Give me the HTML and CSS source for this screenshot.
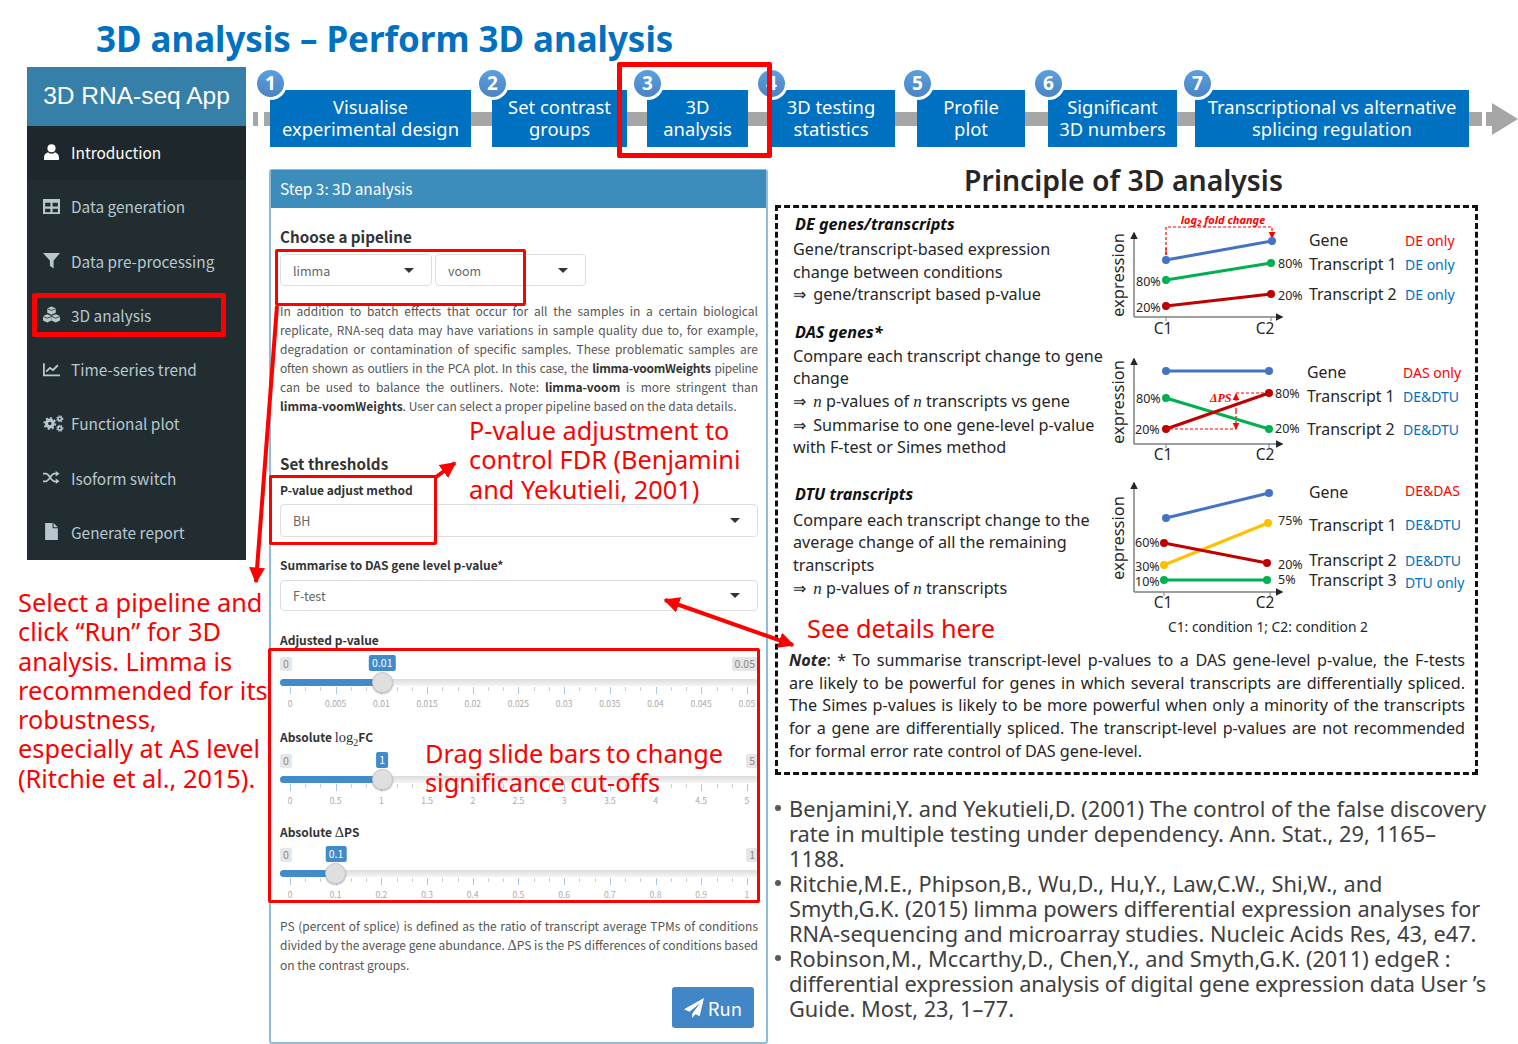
FILE: index.html
```html
<!DOCTYPE html>
<html lang="en">
<head>
    <meta charset="UTF-8">
    <title>3D analysis - Perform 3D analysis</title>
    <link rel="stylesheet" href="styles.css">
</head>
<body>
<div class="slide">
    <h1 class="title">3D analysis – Perform 3D analysis</h1>

    <div class="main">
        <aside class="left">
            <nav class="sidebar">
                <div class="brand">3D RNA-seq App</div>
                <a class="item active">
                    <svg class="ico" viewBox="0 0 16 16"><circle cx="8" cy="4" r="3.8"/><path d="M1 15v-2.500C1 9.500 3.500 8 5 8c1 .8 2 1.200 3 1.200S10 8.800 11 8c1.500 0 4 1.500 4 4.500V15z"/></svg>
                    Introduction
                </a>
                <a class="item">
                    <svg class="ico" viewBox="0 0 16 16"><path fill-rule="evenodd" d="M0 1h16v14H0z M2 4.500h5v3.500H2z M9 4.500h5v3.500H9z M2 10h5v3.500H2z M9 10h5v3.500H9z"/></svg>
                    Data generation
                </a>
                <a class="item">
                    <svg class="ico" viewBox="0 0 16 16"><path d="M0 1h16L10 8v7.500L6.500 13V8z"/></svg>
                    Data pre-processing
                </a>
                <a class="item">
                    <svg class="ico" viewBox="0 0 16 16"><path d="M8 .5l4 1.700v4.200L8 8.200 4 6.400V2.200z"/><path d="M4 7.800l4 1.700v4.200l-4 1.800-4-1.800V9.500z"/><path d="M12 7.800l4 1.700v4.200l-4 1.800-4-1.800V9.500z"/><path class="cube-line" d="M4 2.500L8 4.200l4-1.700M0 9.800L4 11.500l4-1.700M8 9.800L12 11.500l4-1.700"/></svg>
                    3D analysis
                </a>
                <a class="item">
                    <svg class="ico" viewBox="0 0 16 16"><path class="ln" d="M.8 2v11.500H16"/><path class="ln" d="M3 10l3.500-3.500 3 2L14 4"/></svg>
                    Time-series trend
                </a>
                <a class="item">
                    <svg class="ico ico-wide" viewBox="0 0 20 16"><circle class="cog" cx="6.500" cy="8" r="3.200"/><circle class="teeth" cx="6.500" cy="8" r="5.300"/><circle class="cog thin" cx="16" cy="3.500" r="1.700"/><circle class="teeth thin" cx="16" cy="3.500" r="2.900"/><circle class="cog thin" cx="16" cy="12.500" r="1.700"/><circle class="teeth thin" cx="16" cy="12.500" r="2.900"/></svg>
                    Functional plot
                </a>
                <a class="item">
                    <svg class="ico" viewBox="0 0 18 16"><path class="ln" d="M0 4h3c3.500 0 5.500 8 9 8h2M0 12h3c3.500 0 5.500-8 9-8h2"/><path d="M13.500 1l4 3-4 3zM13.500 9l4 3-4 3z"/></svg>
                    Isoform switch
                </a>
                <a class="item">
                    <svg class="ico" viewBox="0 0 16 16"><path d="M2 0h7v5h5v11H2zM10 0l4 4h-4z"/></svg>
                    Generate report
                </a>
            </nav>
            <p class="note-red side-note">Select a pipeline and<br>click “Run” for 3D<br>analysis. Limma is<br>recommended for its<br>robustness,<br>especially at AS level<br>(Ritchie et al., 2015).</p>
        </aside>

        <div class="work">
            <div class="strip">
                <i class="break"></i>
                <div class="step s1"><b class="num">1</b>Visualise<br>experimental design</div>
                <div class="step s2"><b class="num">2</b>Set contrast<br>groups</div>
                <div class="step s3"><b class="num">3</b>3D<br>analysis</div>
                <div class="step s4"><b class="num">4</b>3D testing<br>statistics</div>
                <div class="step s5"><b class="num">5</b>Profile<br>plot</div>
                <div class="step s6"><b class="num">6</b>Significant<br>3D numbers</div>
                <div class="step s7"><b class="num">7</b>Transcriptional vs alternative<br>splicing regulation</div>
                <i class="break end"></i>
                <i class="stem"></i>
                <i class="head"></i>
            </div>

            <div class="row">
                <section class="panel">
                    <div class="panel-head">Step 3: 3D analysis</div>
                    <div class="panel-body">
                        <h4 class="big-label first">Choose a pipeline</h4>
                        <div class="pipes">
                            <div class="select small-a">limma<i class="caret"></i></div>
                            <div class="select small-b">voom<i class="caret"></i></div>
                        </div>
                        <p class="copy intro">
                            <span class="j">In addition to batch effects that occur for all the samples in a certain biological</span>
                            <span class="j">replicate, RNA-seq data may have variations in sample quality due to, for example,</span>
                            <span class="j">degradation or contamination of specific samples. These problematic samples are</span>
                            <span class="j tight">often shown as outliers in the PCA plot. In this case, the <b>limma-voomWeights</b> pipeline</span>
                            <span class="j">can be used to balance the outliners. Note: <b>limma-voom</b> is more stringent than</span>
                            <span><b>limma-voomWeights</b>. User can select a proper pipeline based on the data details.</span>
                        </p>

                        <h4 class="big-label thresholds">Set thresholds</h4>
                        <label class="lbl lbl-method">P-value adjust method</label>
                        <div class="select tall">BH<i class="caret"></i></div>
                        <label class="lbl lbl-sum">Summarise to DAS gene level p-value*</label>
                        <div class="select mid">F-test<i class="caret"></i></div>

                        <label class="lbl lbl-adj">Adjusted p-value</label>
                        <div class="slider gap-6">
                            <div class="slider-top">
                                <span class="bound">0</span>
                                <span class="val" style="left:21.4%">0.01</span>
                                <span class="bound">0.05</span>
                            </div>
                            <div class="track"><div class="fill" style="width:21.4%"></div><span class="handle" style="left:21.4%"></span></div>
                            <div class="ticks"></div>
                            <div class="tick-labels"><span>0</span><span>0.005</span><span>0.01</span><span>0.015</span><span>0.02</span><span>0.025</span><span>0.03</span><span>0.035</span><span>0.04</span><span>0.045</span><span>0.05</span></div>
                        </div>

                        <label class="lbl lbl-fc">Absolute <span class="math">log<sub>2</sub></span>FC</label>
                        <div class="slider gap-6">
                            <div class="slider-top">
                                <span class="bound">0</span>
                                <span class="val" style="left:21.4%">1</span>
                                <span class="bound">5</span>
                            </div>
                            <div class="track"><div class="fill" style="width:21.4%"></div><span class="handle" style="left:21.4%"></span></div>
                            <div class="ticks"></div>
                            <div class="tick-labels"><span>0</span><span>0.5</span><span>1</span><span>1.5</span><span>2</span><span>2.5</span><span>3</span><span>3.5</span><span>4</span><span>4.5</span><span>5</span></div>
                        </div>

                        <label class="lbl lbl-ps">Absolute <span class="math">Δ</span>PS</label>
                        <div class="slider gap-5">
                            <div class="slider-top">
                                <span class="bound">0</span>
                                <span class="val" style="left:11.7%">0.1</span>
                                <span class="bound">1</span>
                            </div>
                            <div class="track"><div class="fill" style="width:11.7%"></div><span class="handle" style="left:11.7%"></span></div>
                            <div class="ticks"></div>
                            <div class="tick-labels"><span>0</span><span>0.1</span><span>0.2</span><span>0.3</span><span>0.4</span><span>0.5</span><span>0.6</span><span>0.7</span><span>0.8</span><span>0.9</span><span>1</span></div>
                        </div>

                        <p class="copy outro">
                            <span class="j">PS (percent of splice) is defined as the ratio of transcript average TPMs of conditions</span>
                            <span class="j">divided by the average gene abundance. <span class="math">Δ</span>PS is the PS differences of conditions based</span>
                            <span>on the contrast groups.</span>
                        </p>

                        <div class="actions">
                            <button class="run">
                                <svg viewBox="0 0 16 16"><path d="M16 0L0 9l4.500 2L13 4l-6.500 8.500V16l2.700-3 3.300 1.500z"/></svg>
                                Run
                            </button>
                        </div>
                    </div>
                </section>

                <section class="principle">
                    <h2 class="principle-title">Principle of 3D analysis</h2>
                    <div class="dash-box">
                        <div class="dash-top">
                            <div class="explain">
                                <h5>DE genes/transcripts</h5>
                                <span>Gene/transcript-based expression</span>
                                <span>change between conditions</span>
                                <span><i class="ar">⇒</i> gene/transcript based p-value</span>

                                <h5 class="das">DAS genes*</h5>
                                <span>Compare each transcript change to gene</span>
                                <span>change</span>
                                <span><i class="ar">⇒</i> <i class="n">n</i> p-values of <i class="n">n</i> transcripts vs gene</span>
                                <span><i class="ar">⇒</i> Summarise to one gene-level p-value</span>
                                <span>with F-test or Simes method</span>

                                <h5 class="dtu">DTU transcripts</h5>
                                <span>Compare each transcript change to the</span>
                                <span>average change of all the remaining</span>
                                <span>transcripts</span>
                                <span><i class="ar">⇒</i> <i class="n">n</i> p-values of <i class="n">n</i> transcripts</span>
                            </div>

                            <svg class="charts" viewBox="1100 208 375 430">
                                <defs>
                                    <marker id="ax" viewBox="0 0 10 10" refX="8" refY="5" markerWidth="5" markerHeight="5" orient="auto"><path d="M0 0L10 5L0 10z" fill="#262626"/></marker>
                                    <marker id="rd" viewBox="0 0 10 10" refX="9" refY="5" markerWidth="6" markerHeight="6" orient="auto-start-reverse"><path d="M0 0L10 5L0 10z" fill="#f00"/></marker>
                                </defs>

                                <!-- chart 1 -->
                                <path class="axis" d="M1134 317V233" marker-end="url(#ax)"/>
                                <path class="axis" d="M1134 317H1282" marker-end="url(#ax)"/>
                                <path class="axis thin" d="M1166 317v4M1271 317v4"/>
                                <text class="yl" transform="translate(1124 275) rotate(-90)">expression</text>
                                <text class="cx" x="1163" y="334">C1</text><text class="cx" x="1265" y="334">C2</text>
                                <path class="dash" d="M1166 255V227H1272V236" />
                                <path class="dash nodash" d="M1166 248V255M1272 232V238" marker-end="url(#rd)"/>
                                <text class="fold" x="1223" y="224">log<tspan class="low" dy="2">2</tspan><tspan dy="-2"> fold change</tspan></text>
                                <g class="blue"><path d="M1166 260L1272 241"/><circle cx="1166" cy="260" r="4"/><circle cx="1272" cy="241" r="4"/></g>
                                <g class="green"><path d="M1166 280L1271 263"/><circle cx="1166" cy="280" r="4"/><circle cx="1271" cy="263" r="4"/></g>
                                <g class="red"><path d="M1166 306L1271 294"/><circle cx="1166" cy="306" r="4"/><circle cx="1271" cy="294" r="4"/></g>
                                <text class="pc" x="1136" y="286">80%</text><text class="pc" x="1136" y="312">20%</text>
                                <text class="pc" x="1278" y="268">80%</text><text class="pc" x="1278" y="300">20%</text>
                                <text class="nm" x="1309" y="246">Gene</text><text class="nm" x="1309" y="270">Transcript 1</text><text class="nm" x="1309" y="300">Transcript 2</text>
                                <text class="tg r" x="1405" y="246">DE only</text><text class="tg" x="1405" y="270">DE only</text><text class="tg" x="1405" y="300">DE only</text>

                                <!-- chart 2 -->
                                <path class="axis" d="M1134 444V359" marker-end="url(#ax)"/>
                                <path class="axis" d="M1134 444H1282" marker-end="url(#ax)"/>
                                <path class="axis thin" d="M1166 444v4M1269 444v4"/>
                                <text class="yl" transform="translate(1124 402) rotate(-90)">expression</text>
                                <text class="cx" x="1163" y="460">C1</text><text class="cx" x="1265" y="460">C2</text>
                                <path class="dash" d="M1170 429H1236M1236 393H1265"/>
                                <path class="dash" d="M1236 411V429" marker-end="url(#rd)"/>
                                <path class="dash" d="M1236 411V394" marker-end="url(#rd)"/>
                                <text class="dps" x="1210" y="402">ΔPS</text>
                                <g class="blue"><path d="M1166 371H1269"/><circle cx="1166" cy="371" r="4"/><circle cx="1269" cy="371" r="4"/></g>
                                <g class="green"><path d="M1166 398L1269 429"/><circle cx="1166" cy="398" r="4"/><circle cx="1269" cy="429" r="4"/></g>
                                <g class="red"><path d="M1166 429L1269 393"/><circle cx="1166" cy="429" r="4"/><circle cx="1269" cy="393" r="4"/></g>
                                <text class="pc" x="1136" y="403">80%</text><text class="pc" x="1135" y="434">20%</text>
                                <text class="pc" x="1275" y="398">80%</text><text class="pc" x="1275" y="433">20%</text>
                                <text class="nm" x="1307" y="378">Gene</text><text class="nm" x="1307" y="402">Transcript 1</text><text class="nm" x="1307" y="435">Transcript 2</text>
                                <text class="tg r" x="1403" y="378">DAS only</text><text class="tg" x="1403" y="402">DE&amp;DTU</text><text class="tg" x="1403" y="435">DE&amp;DTU</text>

                                <!-- chart 3 -->
                                <path class="axis" d="M1134 592V483" marker-end="url(#ax)"/>
                                <path class="axis" d="M1134 592H1282" marker-end="url(#ax)"/>
                                <path class="axis thin" d="M1164 592v4M1270 592v4"/>
                                <text class="yl" transform="translate(1124 538) rotate(-90)">expression</text>
                                <text class="cx" x="1163" y="608">C1</text><text class="cx" x="1265" y="608">C2</text>
                                <g class="blue"><path d="M1166 518L1269 493"/><circle cx="1166" cy="518" r="4"/><circle cx="1269" cy="493" r="4"/></g>
                                <g class="yellow"><path d="M1164 565L1268 523"/><circle cx="1164" cy="565" r="4"/><circle cx="1268" cy="523" r="4"/></g>
                                <g class="red"><path d="M1164 543L1267 563"/><circle cx="1164" cy="543" r="4"/><circle cx="1267" cy="563" r="4"/></g>
                                <g class="green"><path d="M1164 580H1267"/><circle cx="1164" cy="580" r="4"/><circle cx="1267" cy="580" r="4"/></g>
                                <text class="pc" x="1135" y="547">60%</text><text class="pc" x="1135" y="571">30%</text><text class="pc" x="1135" y="586">10%</text>
                                <text class="pc" x="1278" y="525">75%</text><text class="pc" x="1278" y="569">20%</text><text class="pc" x="1278" y="584">5%</text>
                                <text class="nm" x="1309" y="498">Gene</text><text class="nm" x="1309" y="531">Transcript 1</text><text class="nm" x="1309" y="566">Transcript 2</text><text class="nm" x="1309" y="586">Transcript 3</text>
                                <text class="tg r" x="1405" y="496">DE&amp;DAS</text><text class="tg" x="1405" y="530">DE&amp;DTU</text><text class="tg" x="1405" y="566">DE&amp;DTU</text><text class="tg" x="1405" y="588">DTU only</text>
                                <text class="cond" x="1168" y="632">C1: condition 1; C2: condition 2</text>
                            </svg>
                        </div>

                        <p class="note">
                            <span class="j"><b><i>Note</i></b>: * To summarise transcript-level p-values to a DAS gene-level p-value, the F-tests</span>
                            <span class="j">are likely to be powerful for genes in which several transcripts are differentially spliced.</span>
                            <span class="j">The Simes p-values is likely to be more powerful when only a minority of the transcripts</span>
                            <span class="j">for a gene are differentially spliced. The transcript-level p-values are not recommended</span>
                            <span>for formal error rate control of DAS gene-level.</span>
                        </p>
                    </div>

                    <ul class="refs">
                        <li>Benjamini,Y. and Yekutieli,D. (2001) The control of the false discovery<br>rate in multiple testing under dependency. Ann. Stat., 29, 1165–<br>1188.</li>
                        <li>Ritchie,M.E., Phipson,B., Wu,D., Hu,Y., Law,C.W., Shi,W., and<br>Smyth,G.K. (2015) limma powers differential expression analyses for<br>RNA-sequencing and microarray studies. Nucleic Acids Res, 43, e47.</li>
                        <li>Robinson,M., Mccarthy,D., Chen,Y., and Smyth,G.K. (2011) edgeR :<br><span class="squeeze">differential expression analysis of digital gene expression data User ’s</span><br>Guide. Most, 23, 1–77.</li>
                    </ul>
                </section>
            </div>
        </div>
    </div>

    <!-- red call-outs drawn over the slide -->
    <div class="mark m-step"></div>
    <div class="mark m-nav"></div>
    <div class="mark thin-mark m-pipe"></div>
    <div class="mark thin-mark m-method"></div>
    <div class="mark thin-mark m-sliders"></div>
    <p class="note-red over-adjust">P-value adjustment to<br>control FDR (Benjamini<br>and Yekutieli, 2001)</p>
    <p class="note-red over-drag">Drag slide bars to change<br>significance cut-offs</p>
    <p class="note-red over-see">See details here</p>
    <svg class="arrows" viewBox="0 0 1518 1044">
        <defs>
            <marker id="tip" viewBox="0 0 10 10" refX="9" refY="5" markerWidth="4" markerHeight="4" orient="auto-start-reverse"><path d="M0 0L10 5L0 10z" fill="#f00"/></marker>
        </defs>
        <path d="M277 306L256 582" marker-end="url(#tip)"/>
        <path d="M436 477L455 463" marker-end="url(#tip)"/>
        <path d="M665 600L793 645" marker-start="url(#tip)" marker-end="url(#tip)"/>
    </svg>
</div>
</body>
</html>
```

FILE: styles.css
```css
* {
    box-sizing: border-box;
}
body {
    margin: 0;
    background: #fff;
    font-family: 'Noto Sans', sans-serif;
}
.slide {
    position: relative;
    width: 1518px;
    height: 1044px;
    overflow: hidden;
}
.title {
    margin: 0;
    height: 67px;
    padding: 14px 0 0 96px;
    font-size: 34.900px;
    line-height: 50px;
    font-weight: 700;
    color: #0070c0;
    white-space: nowrap;
}
.main {
    display: flex;
    height: 977px;
}

/* left column */
.left {
    width: 253px;
    flex: none;
}
.sidebar {
    margin-left: 27px;
    width: 219px;
    background: #222d32;
    font-family: 'Noto Sans CJK SC', sans-serif;
}
.brand {
    height: 59px;
    background: #367fa9;
    color: #fff;
    font-family: 'Liberation Sans', sans-serif;
    font-size: 24.500px;
    line-height: 57px;
    text-align: center;
}
.item {
    display: flex;
    align-items: center;
    gap: 11px;
    height: 54.250px;
    padding-left: 16px;
    padding-bottom: 2px;
    font-size: 15.400px;
    color: #b8c7ce;
}
.item.active {
    background: #1e282c;
    color: #fff;
}
.ico {
    width: 17px;
    height: 17px;
    flex: none;
    fill: currentColor;
}
.ico-wide {
    width: 21px;
    margin-right: -4px;
}
.ico .ln {
    fill: none;
    stroke: currentColor;
    stroke-width: 1.800;
}
.ico .cube-line {
    fill: none;
    stroke: #222d32;
    stroke-width: .8;
}
.ico .cog {
    fill: none;
    stroke: currentColor;
    stroke-width: 3;
}
.ico .teeth {
    fill: none;
    stroke: currentColor;
    stroke-width: 1.600;
    stroke-dasharray: 2 2.100;
}
.ico .cog.thin {
    stroke-width: 1.600;
}
.ico .teeth.thin {
    stroke-width: 1;
    stroke-dasharray: 1.200 1.200;
}
.note-red {
    margin: 0;
    color: #f00;
    font-size: 25.300px;
    line-height: 29.300px;
    white-space: nowrap;
}
.side-note {
    margin-top: 28px;
    padding-left: 18px;
}

/* steps */
.work {
    flex: none;
    width: 1265px;
    padding-top: 23px;
}
.strip {
    display: flex;
    align-items: center;
    height: 57px;
    background: linear-gradient(#a6a6a6, #a6a6a6) 0 22px / 1229px 14px no-repeat;
}
.break {
    width: 6px;
    height: 15px;
    margin-left: 5px;
    margin-right: 6px;
    background: #fff;
}
.break.end {
    width: 4px;
    margin: 0 0 0 13px;
}
.stem {
    width: 6px;
    height: 14px;
    background: #a6a6a6;
}
.head {
    border-left: 26px solid #a6a6a6;
    border-top: 16.500px solid transparent;
    border-bottom: 16.500px solid transparent;
}
.step {
    position: relative;
    height: 57px;
    padding-top: 5.500px;
    background: #0070c0;
    color: #fff;
    font-size: 18.400px;
    line-height: 22.500px;
    text-align: center;
    white-space: nowrap;
}
.s1 { width: 201px; }
.s2 { width: 135px; margin-left: 21px; }
.s3 { width: 101px; margin-left: 20px; }
.s4 { width: 128px; margin-left: 19px; }
.s5 { width: 108px; margin-left: 22px; }
.s6 { width: 129px; margin-left: 23px; }
.s7 { width: 274px; margin-left: 18px; }
.num {
    position: absolute;
    left: -16px;
    top: -23px;
    width: 33px;
    height: 33px;
    border: 3px solid #fff;
    border-radius: 50%;
    background: linear-gradient(#5b9fdf, #4a84c4);
    font-size: 19px;
    line-height: 26px;
    font-weight: 700;
}
.s4 .num { left: -12px; }
.s7 .num { left: -14px; }

/* shiny panel */
.row {
    display: flex;
    align-items: flex-start;
    margin-top: 16px;
}
.panel {
    width: 499px;
    height: 875px;
    margin: 6px 0 0 16px;
    border: 1px solid #8fbcdb;
    border-width: 1px 2px 2px;
    border-radius: 3px;
    font-family: 'Noto Sans CJK SC', sans-serif;
    color: #333;
    flex: none;
}
.panel-head {
    height: 38px;
    padding-left: 9px;
    background: #3c8dbc;
    color: #fff;
    font-size: 15.400px;
    line-height: 36px;
}
.panel-body {
    padding: 0 8px 0 9px;
}
.big-label {
    margin: 0;
    font-size: 15.200px;
    line-height: 20px;
    font-weight: 700;
}
.big-label.first { padding-top: 18px; }
.thresholds { margin-top: 38px; }
.pipes {
    display: flex;
    gap: 3px;
    margin-top: 8px;
}
.select {
    display: flex;
    align-items: center;
    justify-content: space-between;
    padding: 0 17px 0 12px;
    border: 1px solid #dedede;
    border-radius: 4px;
    font-size: 12.500px;
    color: #666;
    height: 33px;
}
.small-a { width: 152px; height: 32px; }
.small-b { width: 151px; height: 32px; }
.select.mid { height: 31px; margin-top: 7px; }
.select.tall { margin-top: 6px; }
.caret {
    width: 0;
    border-left: 5px solid transparent;
    border-right: 5px solid transparent;
    border-top: 5px solid #333;
}
.copy {
    margin: 0;
    font-size: 12px;
    line-height: 19px;
    color: #555;
}
.copy b {
    color: #333;
}
.copy > span, .note > span {
    display: block;
}
.j {
    text-align: justify;
    text-align-last: justify;
}
.tight {
    letter-spacing: -.25px;
}
.intro { margin-top: 15px; }
.outro { margin-top: 16px; }
.lbl {
    display: block;
    font-size: 12px;
    line-height: 16px;
    font-weight: 700;
}
.lbl-method { margin-top: 9px; }
.lbl-sum { margin-top: 20px; }
.lbl-adj { margin-top: 21px; }
.lbl-fc { margin-top: 20px; }
.lbl-ps { margin-top: 18px; }
.math {
    font-family: 'Liberation Serif', serif;
    font-size: 14.500px;
    font-weight: 400;
}
.math sub {
    font-size: 10px;
    line-height: 0;
}

/* sliders */
.slider {
    margin-top: 6px;
    font-size: 10.500px;
}
.slider.gap-5 { margin-top: 5px; }
.slider-top {
    position: relative;
    display: flex;
    justify-content: space-between;
    align-items: center;
    height: 20px;
}
.bound {
    padding: 0 3px;
    height: 14px;
    line-height: 14px;
    background: #e6e6e6;
    border-radius: 2px;
    color: #888;
}
.val {
    position: absolute;
    top: 1px;
    transform: translateX(-50%);
    padding: 0 3px;
    height: 16px;
    line-height: 16px;
    background: #428bca;
    border-radius: 2px;
    color: #fff;
}
.track {
    position: relative;
    height: 7px;
    margin-top: 5px;
    border-radius: 4px;
    background: linear-gradient(#dcdcdc, #f5f5f5);
}
.fill {
    height: 100%;
    border-radius: 4px 0 0 4px;
    background: #428bca;
}
.handle {
    position: absolute;
    top: -7px;
    width: 21px;
    height: 21px;
    margin-left: -10.500px;
    border: 1px solid #c8c8c8;
    border-radius: 50%;
    background: #dfdfdf;
    box-shadow: 0 1px 2px rgba(0,0,0,.3);
}
.ticks {
    height: 7px;
    margin: 1px 10px 0;
    background:
        repeating-linear-gradient(to right, #a9c8e2 0 1px, transparent 1px 45.700px) 0 0 / 100% 7px no-repeat,
        repeating-linear-gradient(to right, #cfcfcf 0 1px, transparent 1px 15.233px) 0 0 / 100% 4px no-repeat;
}
.tick-labels {
    display: grid;
    grid-template-columns: repeat(11, 45.700px);
    justify-items: center;
    margin: 3px 0 0 -12.850px;
    font-size: 8.500px;
    line-height: 12px;
    color: #aaa;
}
.actions {
    display: flex;
    justify-content: flex-end;
    margin: 13px 4px 0 0;
}
.run {
    display: flex;
    align-items: center;
    justify-content: center;
    gap: 4px;
    width: 82px;
    height: 41px;
    border: none;
    border-radius: 3px;
    background: #4186c6;
    color: #fff;
    font-family: inherit;
    font-size: 18.500px;
}
.run svg {
    width: 20px;
    height: 20px;
    fill: #fff;
}

/* right side */
.principle {
    flex: none;
    margin-left: 7px;
    width: 730px;
}
.principle-title {
    margin: 0;
    width: 703px;
    height: 42px;
    padding-right: 6px;
    font-size: 28.400px;
    line-height: 35px;
    font-weight: 600;
    color: #262626;
    text-align: center;
}
.dash-box {
    width: 703px;
    height: 570px;
    border: 3px dashed #111;
}
.dash-top {
    display: flex;
    height: 430px;
}
.explain {
    width: 322px;
    padding: 5px 0 0 15px;
    font-size: 16.200px;
    line-height: 22.600px;
    color: #262626;
    white-space: nowrap;
    flex: none;
}
.explain span {
    display: block;
}
.explain h5 {
    margin: 0 0 2px 2px;
    font-size: 16.200px;
    line-height: 23px;
    font-style: italic;
    font-weight: 700;
    color: #111;
}
.explain .das { margin-top: 15px; margin-bottom: 1px; }
.explain .dtu { margin-top: 24px; margin-bottom: 3px; }
.ar {
    font-style: normal;
    margin-right: 3px;
}
.n {
    font-family: 'Liberation Serif', serif;
    font-size: 17px;
}
.charts {
    width: 375px;
    height: 430px;
    flex: none;
}
.charts text {
    font-family: 'Noto Sans', sans-serif;
    fill: #262626;
}
.axis {
    fill: none;
    stroke: #7f7f7f;
    stroke-width: 1.500;
}
.axis.thin { stroke-width: 1; }
.yl { font-size: 16.500px; text-anchor: middle; }
.cx { font-size: 15.500px; text-anchor: middle; }
.pc { font-size: 12.500px; }
.nm { font-size: 15.900px; }
.tg { font-size: 14px; fill: #0070c0 !important; }
.tg.r { fill: #f00 !important; }
.cond { font-size: 13.800px; }
.fold {
    font-size: 11px;
    font-weight: 700;
    font-style: italic;
    text-anchor: middle;
    fill: #f00 !important;
}
.fold .low { font-size: 8px; fill: #f00; }
.dps {
    font-family: 'Liberation Serif', serif !important;
    font-size: 12px;
    font-weight: 700;
    font-style: italic;
    fill: #f00 !important;
}
.dash {
    fill: none;
    stroke: #f00;
    stroke-width: 1.200;
    stroke-dasharray: 3 2;
}
.dash.nodash { stroke-dasharray: none; }
.blue path, .green path, .red path, .yellow path {
    fill: none;
    stroke-width: 3;
}
.blue path { stroke: #4472c4; }
.blue circle { fill: #4472c4; }
.green path { stroke: #00b050; }
.green circle { fill: #00b050; }
.red path { stroke: #c00000; }
.red circle { fill: #c00000; }
.yellow path { stroke: #ffc000; }
.yellow circle { fill: #ffc000; }
.note {
    margin: 11px 0 0;
    padding: 0 10px 0 11px;
    font-size: 16.200px;
    line-height: 22.700px;
    color: #262626;
}
.refs {
    list-style: none;
    margin: 21px 0 0;
    padding: 0 0 0 14px;
    font-size: 21.750px;
    line-height: 25px;
    color: #404040;
    white-space: nowrap;
}
.refs li {
    position: relative;
}
.refs li::before {
    content: "";
    position: absolute;
    left: -14px;
    top: 9px;
    width: 6px;
    height: 6px;
    border-radius: 50%;
    background: #595959;
}
.squeeze {
    letter-spacing: -.14px;
}

/* red call-outs */
.mark {
    position: absolute;
    border: 5px solid #f00;
    border-radius: 2px;
}
.thin-mark { border-width: 3px; }
.m-step { left: 617px; top: 62px; width: 155px; height: 96px; }
.m-nav { left: 32px; top: 293px; width: 194px; height: 44px; }
.m-pipe { left: 275px; top: 249px; width: 251px; height: 57px; }
.m-method { left: 269px; top: 475px; width: 168px; height: 70px; }
.m-sliders { left: 268px; top: 648px; width: 492px; height: 255px; }
.over-adjust, .over-drag, .over-see {
    position: absolute;
}
.over-adjust { left: 469px; top: 416px; }
.over-drag { left: 425px; top: 739px; word-spacing: -1.400px; }
.over-see { left: 807px; top: 614px; }
.arrows {
    position: absolute;
    left: 0;
    top: 0;
    width: 1518px;
    height: 1044px;
    fill: none;
    stroke: #f00;
    stroke-width: 4;
}
.arrows marker path {
    stroke: none;
}
```
